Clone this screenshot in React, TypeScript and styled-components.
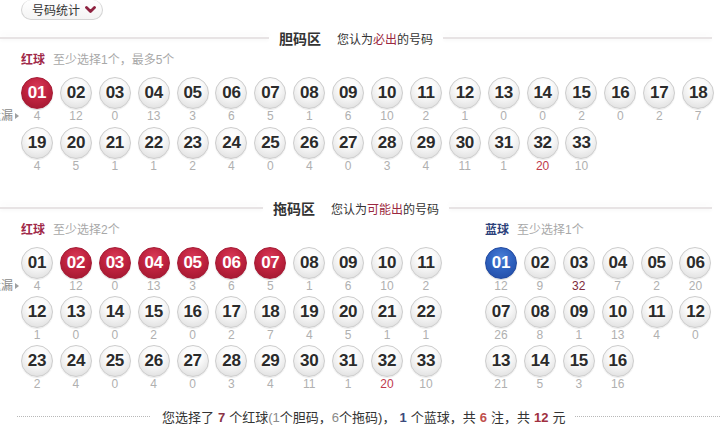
import React from "react";
import styled, { createGlobalStyle } from "styled-components";

const GlobalStyle = createGlobalStyle`
  html, body { margin: 0; padding: 0; background: #fff; }
  body { font-family: "Liberation Sans", "Noto Sans CJK SC", sans-serif; color: #333; }
  * { box-sizing: border-box; }
`;

const Page = styled.div`
  width: 728px;
  height: 431px;
  overflow: hidden;
  background: #fff;
`;

const TopBar = styled.div`
  height: 21px;
  padding-left: 21px;
  display: flex;
  align-items: flex-start;
`;

const StatButton = styled.div`
  height: 20px;
  width: 82px;
  border: 1px solid #d4d4d4;
  border-top: none;
  border-radius: 0 0 10px 10px / 0 0 10px 10px;
  border-radius: 10px;
  background: linear-gradient(#ffffff, #f4f4f4);
  display: flex;
  align-items: center;
  gap: 5px;
  padding-left: 10px;
  font-size: 12px;
  color: #333;
`;

const TitleRow = styled.div<{ $mt: number }>`
  width: 712px;
  height: 18px;
  margin-top: ${(p) => p.$mt}px;
  display: flex;
  align-items: center;
`;

const TitleLine = styled.div`
  flex: 1;
  height: 2px;
  background: #e7e3e4;
  box-shadow: 0 -3px 6px rgba(0, 0, 0, 0.05), 0 2px 3px rgba(0, 0, 0, 0.03);
`;

const TitleText = styled.div`
  display: flex;
  align-items: baseline;
  gap: 16px;
  padding: 0 10px;
`;

const TitleMain = styled.span`
  font-size: 14px;
  font-weight: bold;
  color: #333;
`;

const TitleSub = styled.span`
  font-size: 12px;
  color: #333;
`;

const Em = styled.span`
  color: #9b2840;
`;

const ZoneLabel = styled.div<{ $mt: number; $pl: number }>`
  margin-top: ${(p) => p.$mt}px;
  padding-left: ${(p) => p.$pl}px;
  height: 14px;
  line-height: 14px;
  display: flex;
  align-items: center;
  gap: 8px;
`;

const LabelName = styled.span<{ $blue?: boolean }>`
  font-size: 12px;
  font-weight: bold;
  color: ${(p) => (p.$blue ? "#2b3f7a" : "#a02848")};
`;

const LabelHint = styled.span`
  font-size: 12px;
  color: #a8a8a8;
`;

const BallBlock = styled.div`
  margin-top: 10px;
  display: flex;
`;

const SideCol = styled.div`
  width: 21px;
  display: flex;
  justify-content: flex-end;
  overflow: hidden;
  white-space: nowrap;
  padding-right: 2px;
  height: 60px;
`;

const SideLabel = styled.div`
  margin-top: 32px;
  height: 14px;
  line-height: 14px;
  font-size: 12px;
  color: #8a8a8a;
  display: flex;
  align-items: center;
  gap: 2px;
`;

const Tri = styled.span`
  width: 0;
  height: 0;
  border-left: 4px solid #a0a0a0;
  border-top: 3.5px solid transparent;
  border-bottom: 3.5px solid transparent;
`;

const BallGrid = styled.div<{ $cols: number; $rowGap: number }>`
  display: grid;
  grid-template-columns: repeat(${(p) => p.$cols}, 32px);
  column-gap: 6.9px;
  row-gap: ${(p) => p.$rowGap}px;
`;

const Cell = styled.div`
  display: flex;
  flex-direction: column;
  align-items: center;
`;

const Ball = styled.div<{ $kind: "white" | "red" | "blue" }>`
  width: 32px;
  height: 32px;
  border-radius: 50%;
  display: flex;
  align-items: center;
  justify-content: center;
  font-family: "Liberation Sans", Arial, sans-serif;
  font-weight: bold;
  font-size: 17px;
  letter-spacing: -0.3px;
  color: ${(p) => (p.$kind === "white" ? "#2b2b2b" : "#fff")};
  border: 1px solid
    ${(p) => (p.$kind === "white" ? "#cdcdcd" : p.$kind === "red" ? "#a51c36" : "#2149a0")};
  background: ${(p) =>
    p.$kind === "white"
      ? "radial-gradient(circle at 50% 32%, #ffffff 0%, #fbfbfb 35%, #e6e6e6 75%, #cfcfcf 100%)"
      : p.$kind === "red"
      ? "radial-gradient(circle at 50% 32%, #d83a58 0%, #c0233f 45%, #a81a33 80%, #8e132a 100%)"
      : "radial-gradient(circle at 50% 32%, #4a7fd6 0%, #2f62c0 45%, #2552ac 80%, #1b3f8e 100%)"};
  box-shadow: ${(p) =>
    p.$kind === "white" ? "0 1px 1px rgba(0,0,0,0.08)" : "0 1px 1px rgba(0,0,0,0.15)"};
`;

const Miss = styled.div<{ $tone?: "red" | "maroon" }>`
  height: 14px;
  line-height: 14px;
  font-size: 12px;
  color: ${(p) => (p.$tone === "red" ? "#c0394b" : p.$tone === "maroon" ? "#7d2a3a" : "#b0b0b0")};
`;

const TwoCols = styled.div`
  display: flex;
`;

const RedCol = styled.div`
  width: 485px;
`;

const BlueCol = styled.div``;

const BlueBlock = styled.div`
  margin-top: 10px;
`;

const Summary = styled.div`
  margin-top: 17px;
  height: 16px;
  display: flex;
  align-items: center;
  padding-left: 17px;
  padding-right: 8px;
`;

const Dotted = styled.div<{ $w?: number }>`
  ${(p) => (p.$w ? `width: ${p.$w}px;` : "flex: 1;")}
  border-top: 1px dotted #b8b8b8;
  height: 0;
`;

const SummaryText = styled.div`
  padding: 0 10px 0 12px;
  font-size: 13px;
  color: #333;
  white-space: nowrap;
`;

const Num = styled.b<{ $c: string }>`
  color: ${(p) => p.$c};
  margin: 0 4px;
`;

const Gray = styled.span`
  color: #8a8a8a;
`;

const pad = (n: number) => (n < 10 ? "0" + n : String(n));

const redMiss = [4, 12, 0, 13, 3, 6, 5, 1, 6, 10, 2, 1, 0, 0, 2, 0, 2, 7, 4, 5, 1, 1, 2, 4, 0, 4, 0, 3, 4, 11, 1, 20, 10];
const blueMiss = [12, 9, 32, 7, 2, 20, 26, 8, 1, 13, 4, 0, 21, 5, 3, 16];

type Props = {
  misses: number[];
  selected: number[];
  kind: "red" | "blue";
  highlight: Record<number, "red" | "maroon">;
};

const Balls: React.FC<Props & { cols: number; rowGap: number }> = ({ misses, selected, kind, highlight, cols, rowGap }) => (
  <BallGrid $cols={cols} $rowGap={rowGap}>
    {misses.map((m, i) => {
      const n = i + 1;
      return (
        <Cell key={n}>
          <Ball $kind={selected.includes(n) ? kind : "white"}>{pad(n)}</Ball>
          <Miss $tone={highlight[n]}>{m}</Miss>
        </Cell>
      );
    })}
  </BallGrid>
);

const Side = () => (
  <SideCol>
    <SideLabel>
      遗漏<Tri />
    </SideLabel>
  </SideCol>
);

const Chevron = () => (
  <svg width="11" height="8" viewBox="0 0 11 8">
    <path d="M1.5 1.5 L5.5 5.5 L9.5 1.5" fill="none" stroke="#8e2240" strokeWidth="2.8" strokeLinecap="round" strokeLinejoin="round" />
  </svg>
);

export default function App() {
  return (
    <Page>
      <GlobalStyle />
      <TopBar>
        <StatButton>
          号码统计
          <Chevron />
        </StatButton>
      </TopBar>

      <TitleRow $mt={8}>
        <TitleLine />
        <TitleText>
          <TitleMain>胆码区</TitleMain>
          <TitleSub>
            您认为<Em>必出</Em>的号码
          </TitleSub>
        </TitleText>
        <TitleLine />
      </TitleRow>

      <ZoneLabel $mt={6} $pl={21}>
        <LabelName>红球</LabelName>
        <LabelHint>至少选择1个，最多5个</LabelHint>
      </ZoneLabel>
      <BallBlock>
        <Side />
        <Balls misses={redMiss} selected={[1]} kind="red" highlight={{ 32: "red" }} cols={18} rowGap={4} />
      </BallBlock>

      <TitleRow $mt={26}>
        <TitleLine />
        <TitleText>
          <TitleMain>拖码区</TitleMain>
          <TitleSub>
            您认为<Em>可能出</Em>的号码
          </TitleSub>
        </TitleText>
        <TitleLine />
      </TitleRow>

      <TwoCols>
        <RedCol>
          <ZoneLabel $mt={6} $pl={21}>
            <LabelName>红球</LabelName>
            <LabelHint>至少选择2个</LabelHint>
          </ZoneLabel>
          <BallBlock>
            <Side />
            <Balls misses={redMiss} selected={[2, 3, 4, 5, 6, 7]} kind="red" highlight={{ 32: "red" }} cols={11} rowGap={3} />
          </BallBlock>
        </RedCol>
        <BlueCol>
          <ZoneLabel $mt={6} $pl={0}>
            <LabelName $blue>蓝球</LabelName>
            <LabelHint>至少选择1个</LabelHint>
          </ZoneLabel>
          <BlueBlock>
            <Balls misses={blueMiss} selected={[1]} kind="blue" highlight={{ 3: "maroon" }} cols={6} rowGap={3} />
          </BlueBlock>
        </BlueCol>
      </TwoCols>

      <Summary>
        <Dotted $w={133} />
        <SummaryText>
          您选择了<Num $c="#8b3346">7</Num>个红球<Gray>(1</Gray>个胆码，<Gray>6</Gray>个拖码)，
          <Num $c="#3b4a7c">1</Num>个蓝球，共<Num $c="#c0504d">6</Num>注，共<Num $c="#a0303f">12</Num>元
        </SummaryText>
        <Dotted />
      </Summary>
    </Page>
  );
}
